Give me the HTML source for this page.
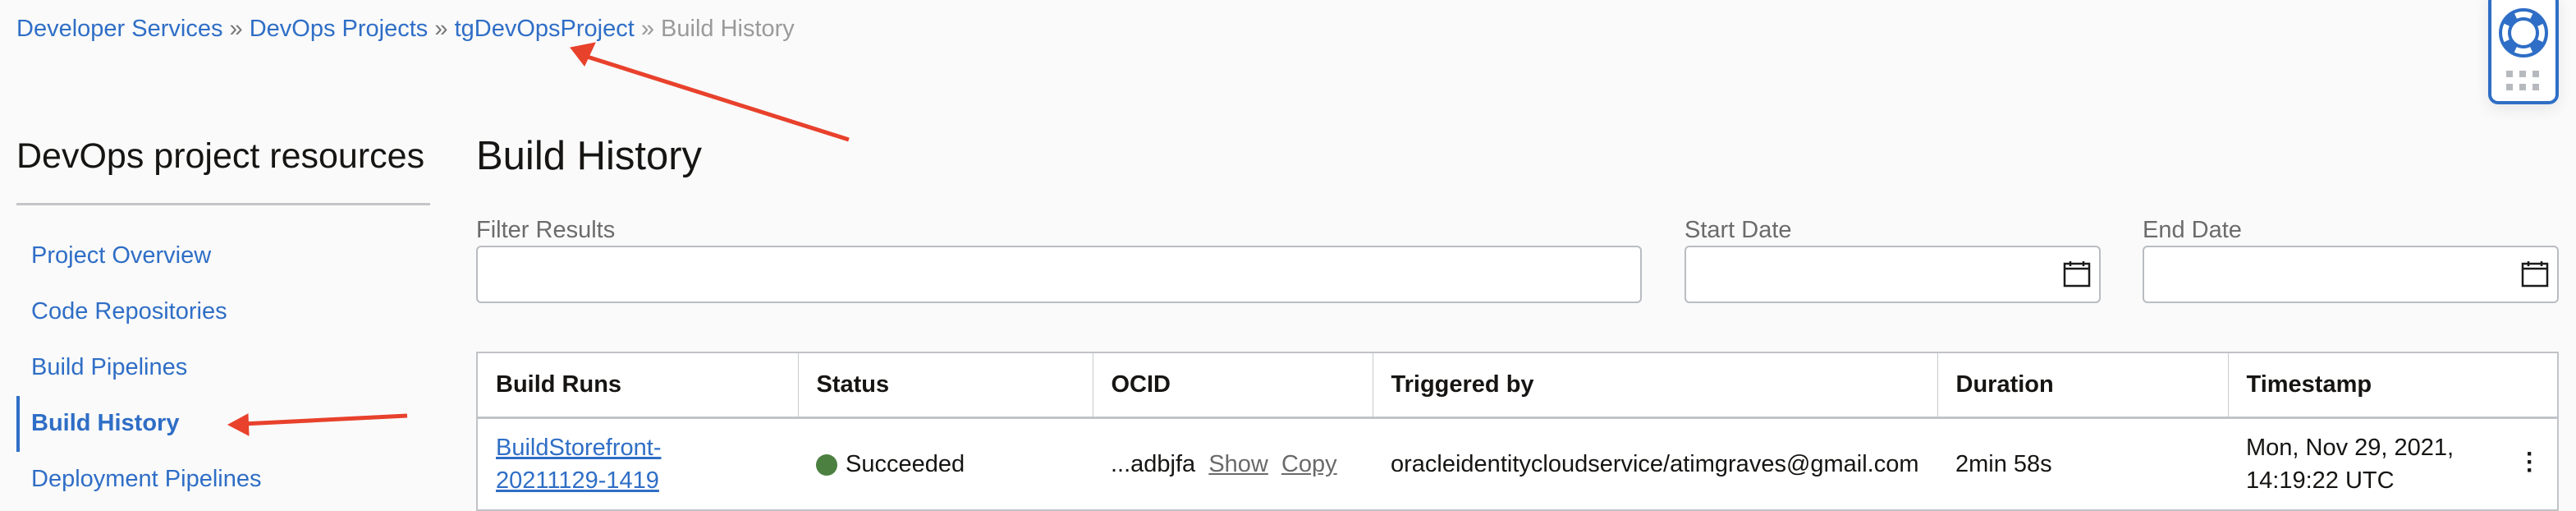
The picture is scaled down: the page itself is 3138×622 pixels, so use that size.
<!DOCTYPE html>
<html><head><meta charset="utf-8"><style>
*{margin:0;padding:0;box-sizing:border-box}
body{width:3138px;height:622px;overflow:hidden;background:#fafafa;font-family:"Liberation Sans",Arial,sans-serif;position:relative;color:#161513}
.a{position:absolute;white-space:nowrap}
.link{color:#2f6ec6}
.bc{font-size:29px;top:19px;left:20px}
.nav{font-size:29px;left:38px}
.inp{position:absolute;border:2px solid #b9bcc1;border-radius:6px;background:#fff;height:70px;top:299px}
.lbl{font-size:29px;color:#6b6b6b;top:264px}
table{position:absolute;left:580px;top:428px;width:2537px;border-collapse:collapse;background:#fff;border:2px solid #c0c3c7}
td,th{text-align:left;padding:0 22px;font-size:29px}
th{height:79px;font-weight:bold;border-right:1.5px solid #c8cacd;border-bottom:3px solid #c0c3c7}
td{height:113px;line-height:40px}
</style></head><body>
<div class="a bc"><span class="link">Developer Services</span> <span style="color:#777">»</span> <span class="link">DevOps Projects</span> <span style="color:#777">»</span> <span class="link">tgDevOpsProject</span> <span style="color:#999">»</span> <span style="color:#9a9a9a">Build History</span></div>

<div class="a" style="left:20px;top:166px;font-size:43px;">DevOps project resources</div>
<div class="a" style="left:20px;top:247px;width:504px;height:3px;background:#c3c5c8"></div>
<div class="a nav link" style="top:295px">Project Overview</div>
<div class="a nav link" style="top:363px">Code Repositories</div>
<div class="a nav link" style="top:431px">Build Pipelines</div>
<div class="a" style="left:20px;top:482px;width:4px;height:68px;background:#2f6ec6"></div>
<div class="a nav link" style="top:499px;font-weight:bold">Build History</div>
<div class="a nav link" style="top:567px">Deployment Pipelines</div>

<div class="a" style="left:580px;top:162px;font-size:49px;">Build History</div>
<div class="a lbl" style="left:580px">Filter Results</div>
<div class="inp" style="left:580px;width:1420px"></div>
<div class="a lbl" style="left:2052px">Start Date</div>
<div class="inp" style="left:2052px;width:507px"></div>
<div class="a lbl" style="left:2610px">End Date</div>
<div class="inp" style="left:2610px;width:507px"></div>
<svg class="a" style="left:2512px;top:318px" width="36" height="32" viewBox="0 0 36 32"><rect x="3" y="3" width="30" height="27" fill="none" stroke="#1b1b1b" stroke-width="2.5"/><line x1="3" y1="9" x2="33" y2="9" stroke="#1b1b1b" stroke-width="2.5"/><line x1="10" y1="0" x2="10" y2="6" stroke="#1b1b1b" stroke-width="2.5"/><line x1="26" y1="0" x2="26" y2="6" stroke="#1b1b1b" stroke-width="2.5"/></svg>
<svg class="a" style="left:3070px;top:318px" width="36" height="32" viewBox="0 0 36 32"><rect x="3" y="3" width="30" height="27" fill="none" stroke="#1b1b1b" stroke-width="2.5"/><line x1="3" y1="9" x2="33" y2="9" stroke="#1b1b1b" stroke-width="2.5"/><line x1="10" y1="0" x2="10" y2="6" stroke="#1b1b1b" stroke-width="2.5"/><line x1="26" y1="0" x2="26" y2="6" stroke="#1b1b1b" stroke-width="2.5"/></svg>

<table>
<tr><th style="width:391px">Build Runs</th><th style="width:359px">Status</th><th style="width:341px">OCID</th><th style="width:688px">Triggered by</th><th style="width:354px">Duration</th><th style="border-right:none">Timestamp</th></tr>
<tr><td><span class="link" style="text-decoration:underline;text-decoration-thickness:3px">BuildStorefront-<br>20211129-1419</span></td>
<td><span style="display:inline-block;width:26px;height:26px;border-radius:50%;background:#4b8040;vertical-align:-5px;margin-right:10px"></span>Succeeded</td>
<td>...adbjfa&nbsp;&nbsp;<span style="color:#6a6a6a;text-decoration:underline">Show</span>&nbsp;&nbsp;<span style="color:#6a6a6a;text-decoration:underline">Copy</span></td>
<td>oracleidentitycloudservice/atimgraves@gmail.com</td>
<td>2min 58s</td>
<td style="position:relative">Mon, Nov 29, 2021,<br>14:19:22 UTC<span style="position:absolute;right:28px;top:38px;font-weight:bold;font-size:30px;line-height:10px">·<br>·<br>·</span></td></tr>
</table>

<div class="a" style="left:3031px;top:-10px;width:86px;height:137px;border:4px solid #2f6ec6;border-radius:12px;background:#fff;box-shadow:0 6px 18px rgba(0,0,0,0.08)"></div>
<svg class="a" style="left:3040px;top:6px" width="68" height="68" viewBox="0 0 68 68">
<circle cx="34" cy="34" r="22.5" fill="none" stroke="#2f6ec6" stroke-width="15"/>
<circle cx="34" cy="34" r="22.5" fill="none" stroke="#fff" stroke-width="7" stroke-dasharray="20 15.34" stroke-dashoffset="10"/>
</svg>
<svg class="a" style="left:3053px;top:86px" width="44" height="26"><g fill="#b6b9be"><rect x="0" y="0" width="8" height="8"/><rect x="16" y="0" width="8" height="8"/><rect x="32" y="0" width="8" height="8"/><rect x="0" y="16" width="8" height="8"/><rect x="16" y="16" width="8" height="8"/><rect x="32" y="16" width="8" height="8"/></g></svg>

<svg class="a" style="left:0;top:0" width="3138" height="622"><g fill="#e8412c" stroke="#e8412c">
<line x1="1034" y1="170" x2="712" y2="68" stroke-width="5"/>
<polygon points="695,58 725,52 712,80" stroke-width="1"/>
<line x1="496" y1="506" x2="296" y2="516" stroke-width="5"/>
<polygon points="278,517 302,504 303,530" stroke-width="1"/>
</g></svg>
</body></html>
